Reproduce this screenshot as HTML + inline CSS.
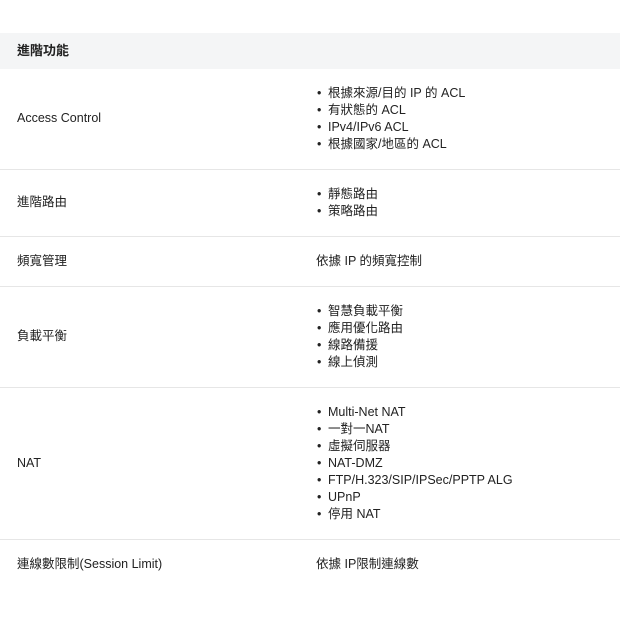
<!DOCTYPE html>
<html><head><meta charset="utf-8"><style>
body{margin:0;background:#fff;font-family:"Liberation Sans","Noto Sans CJK TC",sans-serif;color:#222;font-size:12.5px;}
.h{position:absolute;top:33px;left:0;width:620px;height:36px;background:#f4f5f6;font-weight:bold;font-size:13px;line-height:36px;}
.h span{padding-left:17px}
.t{position:absolute;top:69px;left:0;width:620px}
.r{display:flex;align-items:center;border-bottom:1px solid #e6e6e6;padding:16px 0 17px;line-height:17px}
.r:last-child{border-bottom:none}
.l{width:316px;padding-left:17px;box-sizing:border-box;flex:none}
.v div{position:relative}
.v div.b{padding-left:12px}
.v div.b:before{content:"•";position:absolute;left:1px;top:0}
</style></head><body>
<div class="h"><span>進階功能</span></div>
<div class="t">
<div class="r" style="height:67px"><div class="l">Access Control</div><div class="v"><div class="b">根據來源/目的 IP 的 ACL</div><div class="b">有狀態的 ACL</div><div class="b">IPv4/IPv6 ACL</div><div class="b">根據國家/地區的 ACL</div></div></div>
<div class="r" style="height:33px"><div class="l">進階路由</div><div class="v"><div class="b">靜態路由</div><div class="b">策略路由</div></div></div>
<div class="r" style="height:16px"><div class="l">頻寬管理</div><div class="v"><div>依據 IP 的頻寬控制</div></div></div>
<div class="r" style="height:67px"><div class="l">負載平衡</div><div class="v"><div class="b">智慧負載平衡</div><div class="b">應用優化路由</div><div class="b">線路備援</div><div class="b">線上偵測</div></div></div>
<div class="r" style="height:118px"><div class="l">NAT</div><div class="v"><div class="b">Multi-Net NAT</div><div class="b">一對一NAT</div><div class="b">虛擬伺服器</div><div class="b">NAT-DMZ</div><div class="b">FTP/H.323/SIP/IPSec/PPTP ALG</div><div class="b">UPnP</div><div class="b">停用 NAT</div></div></div>
<div class="r" style="height:17px"><div class="l">連線數限制(Session Limit)</div><div class="v"><div>依據 IP限制連線數</div></div></div>
</div>
</body></html>
